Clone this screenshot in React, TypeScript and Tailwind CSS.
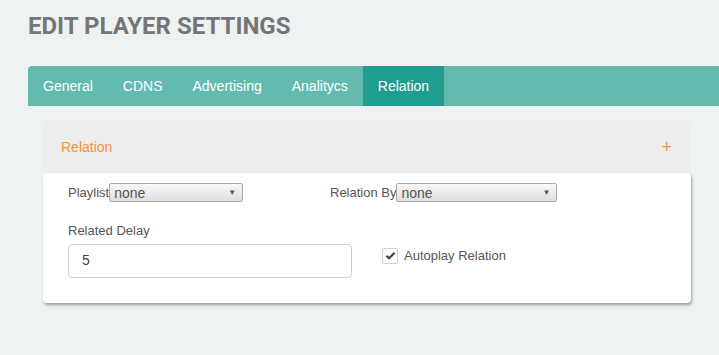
import React from "react";

const tabs = ["General", "CDNS", "Advertising", "Analitycs", "Relation"];

function FakeSelect({ width, value }: { width: string; value: string }) {
  return (
    <div
      className={`${width} h-[19px] flex items-center justify-between border border-[#a9a9a9] rounded-[2px] bg-gradient-to-b from-[#f8f8f8] to-[#dedede] pl-[4px] pr-[6px]`}
    >
      <span className="text-[14px] leading-none text-[#555]">{value}</span>
      <span className="text-[8px] leading-none text-[#555]">▼</span>
    </div>
  );
}

export default function App() {
  return (
    <div className="w-[719px] h-[355px] overflow-hidden bg-[#eef2f3] font-['Liberation_Sans',Arial,sans-serif]">
      <div className="pl-[28px] pt-[13px]">
        {/* Title */}
        <h1 className="font-['Roboto',sans-serif] font-bold text-[24px] leading-[26px] text-[#757575] tracking-[0px]">
          EDIT PLAYER SETTINGS
        </h1>

        {/* Tabs */}
        <div className="mt-[27px] h-[40px] bg-[#63bbb0] rounded-tl-[4px] flex">
          {tabs.map((t) => (
            <div
              key={t}
              className={`h-full flex items-center px-[15px] text-[14px] text-white ${
                t === "Relation" ? "bg-[#1f9d8f]" : ""
              }`}
            >
              {t}
            </div>
          ))}
        </div>

        {/* Panel */}
        <div className="ml-[15px] mr-[28px] mt-[15px]">
          <div className="h-[52px] bg-[#ededed] flex items-center justify-between pl-[18px] pr-[19px]">
            <span className="text-[14px] text-[#f7923c]">Relation</span>
            <span className="text-[18px] leading-none text-[#f7923c]">+</span>
          </div>
          <div className="bg-white rounded-[4px] shadow-[1px_2px_3px_rgba(0,0,0,0.35)] pl-[25px] pt-[10px] pb-[25px]">
            <div className="flex items-center">
              <div className="w-[262px] flex items-center">
                <span className="text-[13px] text-[#555]">Playlist</span>
                <FakeSelect width="w-[134px]" value="none" />
              </div>
              <div className="flex items-center">
                <span className="text-[13px] text-[#555]">Relation By</span>
                <FakeSelect width="w-[161px]" value="none" />
              </div>
            </div>

            <div className="mt-[20px] text-[13px] text-[#555] leading-[16px]">Related Delay</div>
            <div className="mt-[5px] flex items-center">
              <div className="w-[284px] h-[34px] border border-[#cfcfcf] rounded-[4px] flex items-center pl-[13px] text-[14px] text-[#444]">
                5
              </div>
              <div className="ml-[30px] mb-[10px] flex items-center gap-[6px]">
                <div className="w-[16px] h-[16px] border border-[#cfcfcf] rounded-[2px] flex items-center justify-center">
                  <svg viewBox="0 0 12 12" className="w-[11px] h-[11px]">
                    <path d="M1.5 6.2 L4.5 9 L10.5 3" fill="none" stroke="#444" strokeWidth="2.4" />
                  </svg>
                </div>
                <span className="text-[13px] text-[#555]">Autoplay Relation</span>
              </div>
            </div>
          </div>
        </div>
      </div>
    </div>
  );
}
